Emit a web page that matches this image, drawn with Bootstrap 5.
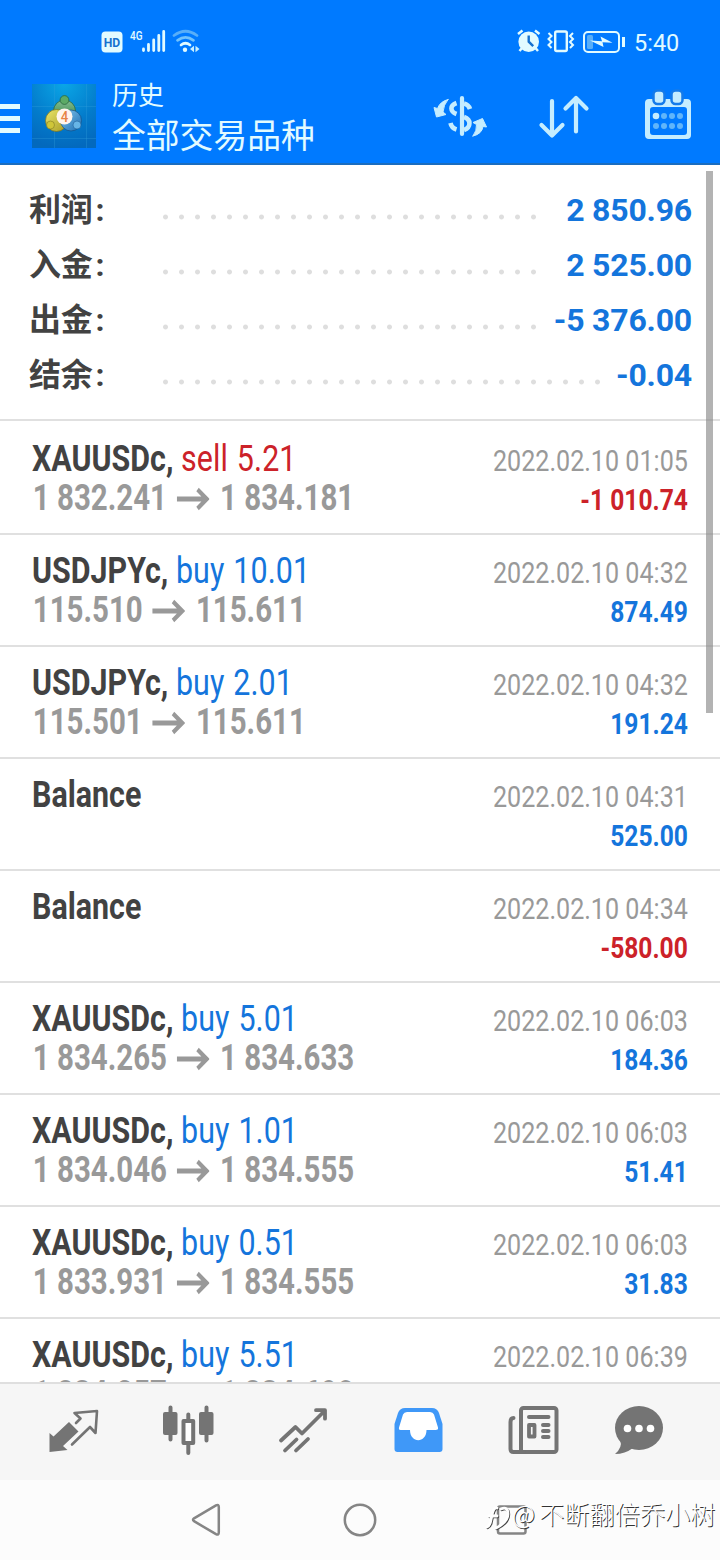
<!DOCTYPE html>
<html lang="zh-CN">
<head>
<meta charset="utf-8">
<meta name="viewport" content="width=device-width, initial-scale=1">
<title>历史</title>
<link href="https://cdn.jsdelivr.net/npm/bootstrap@5.3.0/dist/css/bootstrap.min.css" rel="stylesheet">
<style>
body{font-family:Roboto,"Noto Sans CJK SC",sans-serif;background:#fff;color:#424242}
svg{display:block;flex:none}
.screen{width:720px;height:1560px}
.top-area{height:165px;background:#007aff;border-bottom:2px solid #1b6dbf;color:#e2fbff}
.status-row{height:84px;padding-left:101px}
.status-right{margin-left:316px}
.clock{font-size:23.5px;line-height:28px;margin:1px 0 0 9px}
.app-row{height:79px}
.head-text{margin:-5px 0 0 16px;width:300px}
.head-sub{font-size:26px;line-height:34px}
.head-main{font-size:33.8px;line-height:48px}
.summary{height:256px;padding:18px 28px 0;border-bottom:2px solid #e0e0e0}
.sum-row{height:55px}
.sum-label{width:129px;font-size:32px;line-height:55px;font-weight:700;padding-left:1px;letter-spacing:-.2px;position:relative}
.sum-label i{font-style:normal;margin-left:3px}
.sum-val{font-size:32px;line-height:55px;font-weight:700;color:#1475dc;letter-spacing:-.2px;white-space:pre}
.leader{height:16px;width:384px;margin-top:13px;background:radial-gradient(circle at 8.500px 8px,#dedede 2px,transparent 2.9px) 0 0/16px 16px}
.leader-long{width:448px}
.deals{height:961px}
.deal{height:112px;padding:17px 32px 0;border-bottom:2px solid #e0e0e0}
.deal:first-child{height:114px;padding-top:19px}
.line-sym,.line-price{font-size:36px;line-height:39px;white-space:nowrap;transform-origin:0 0}
.line-sym{transform:scaleX(.845)}
.line-sym span{word-spacing:1.5px;letter-spacing:.1px}
.line-price{transform:scaleX(.818);font-weight:700;color:#999;padding-left:1px}
.line-date,.line-sum{font-size:30px;line-height:39px;white-space:nowrap;transform-origin:100% 0;text-align:right}
.deal-right{padding-top:1px}
.line-date{transform:scaleX(.837);color:#999}
.line-sum{transform:scaleX(.82);font-weight:700}
.up{color:#1475dc}.down{color:#cc2229}
.arr{display:inline-block;width:40px;height:24px;margin:0 13px 0 12px;vertical-align:-1px}
.scroller{right:7px;top:171px;width:7px;height:542px;background:rgba(128,128,128,.6)}
.tabs{height:98px;background:#f6f6f6;border-top:2px solid #dfdfdf}
.sysnav{height:80px;background:#fcfcfc}
.stamp{left:484px;top:1500px;height:32px;color:#fff}
.stamp-text{font-size:25.2px;line-height:30px;margin-top:-2px;text-shadow:1px 1px 0 #333;font-family:"Noto Sans CJK SC",sans-serif;font-weight:300}
</style>
</head>
<body>
<div class="screen position-relative overflow-hidden d-flex flex-column">
  <header class="top-area flex-shrink-0">
    <div class="status-row d-flex align-items-center">
      <svg width="100" height="30" viewBox="101 27 100 30">
        <rect x="101.500" y="31.500" width="21" height="21" rx="4" fill="#e2fbff"/>
        <text x="112" y="46.800" font-size="13.500" font-weight="700" text-anchor="middle" fill="#1672cf" textLength="16.500" lengthAdjust="spacingAndGlyphs">HD</text>
        <text x="130" y="40" font-size="13.500" font-weight="500" fill="#e2fbff" textLength="12.500" lengthAdjust="spacingAndGlyphs">4G</text>
        <path d="M143.500 49v1.500M148.500 44.500v6M153.700 40v10.500M158.800 35.500v15M163.700 31.500v19" stroke="#e2fbff" stroke-width="2.800" stroke-linecap="round"/>
        <g fill="none" stroke-width="2.700" stroke-linecap="round">
          <path d="M174 35.500q11.500-8.500 23 0" stroke="#58aef8"/>
          <path d="M177.500 40.300q8-6 16 0" stroke="#72c2fb"/>
          <path d="M181 45q4.500-3.500 9 0" stroke="#e2fbff"/>
        </g>
        <circle cx="185" cy="49.800" r="2.200" fill="#e2fbff"/>
        <path d="M190 49l4-3.200v6.400zM199.500 49l-4-3.200v6.400z" fill="#c8f0ff"/>
      </svg>
      <svg class="status-right" width="108" height="30" viewBox="517 27 108 30" fill="none" stroke="#e2fbff">
        <circle cx="528.700" cy="41.700" r="10.300" fill="#e2fbff" stroke="none"/>
        <path d="M518 34l4.500-3.500M539.500 34L535 30.500M522 48l-2.500 3M535.500 48l2.500 3" stroke-width="2.500"/>
        <path d="M528.700 35.500v6.200l4.500 4.500" stroke="#1672cf" stroke-width="2.400"/>
        <rect x="555.200" y="31.500" width="11.600" height="19.500" rx="1.500" stroke-width="2.400"/>
        <path d="M548.500 33l3 3-3 3 3 3-3 3 3 3M573 33l-3 3 3 3-3 3 3 3-3 3" stroke-width="2"/>
        <rect x="584" y="32" width="35" height="20" rx="4" stroke-width="2"/>
        <rect x="587" y="35" width="6" height="14" rx="1.500" fill="#58aef8" stroke="none"/>
        <path d="M590 40.500l12 .8-1.500-4.800 12 6.300-10-.5 1 4.700z" fill="#e2fbff" stroke="none"/>
        <path d="M623.500 37v10" stroke-width="3"/>
      </svg>
      <span class="clock">5:40</span>
    </div>
    <div class="app-row d-flex">
      <svg width="32" height="64" viewBox="0 84 32 64"><path d="M0 106.500h20M0 118.500h20M0 130.500h20" stroke="#e2fbff" stroke-width="4.800"/></svg>
      <svg width="64" height="64" viewBox="0 0 64 64">
        <defs>
          <radialGradient id="tile" cx=".5" cy="0" r="1"><stop offset="0" stop-color="#0aa6e6"/><stop offset=".6" stop-color="#037bcb"/><stop offset="1" stop-color="#0369bd"/></radialGradient>
          <linearGradient id="gr" x2="0" y2="1"><stop stop-color="#86bd92"/><stop offset="1" stop-color="#287e39"/></linearGradient>
          <linearGradient id="ye" x2="1" y2="1"><stop stop-color="#e9e56b"/><stop offset="1" stop-color="#a79c23"/></linearGradient>
          <linearGradient id="bl" x2="1" y2="1"><stop stop-color="#85c7ed"/><stop offset="1" stop-color="#1a6db4"/></linearGradient>
        </defs>
        <rect width="64" height="64" fill="url(#tile)"/>
        <path d="M0 22.500h64M0 54.500h64M22.500 0v64M54.500 0v64" stroke="#35a3de" stroke-opacity=".3"/>
        <circle cx="32.500" cy="27" r="11" fill="url(#gr)" stroke="#235f38" stroke-width=".7"/><circle cx="32.500" cy="16" r="4.400" fill="#5caa66" stroke="#235f38" stroke-width=".7"/>
        <circle cx="24.500" cy="36.500" r="11" fill="url(#ye)" stroke="#756e20" stroke-width=".7"/><circle cx="18.500" cy="41" r="4" fill="#cfc638" stroke="#756e20" stroke-width=".5"/>
        <circle cx="39" cy="36.500" r="10.500" fill="url(#bl)" stroke="#17518a" stroke-width=".7"/><circle cx="45" cy="41" r="4" fill="#66b5e6" stroke="#17518a" stroke-width=".5"/>
        <circle cx="32.500" cy="32.500" r="8" fill="#fff5ed"/>
        <text x="32.500" y="38" font-size="15.500" text-anchor="middle" fill="#e78345" font-weight="500" textLength="7.500" lengthAdjust="spacingAndGlyphs">4</text>
      </svg>
      <div class="head-text">
        <div class="head-sub">历史</div>
        <div class="head-main">全部交易品种</div>
      </div>
      <svg width="292" height="64" viewBox="412 84 292 64" fill="none" stroke="#c5edff" stroke-linecap="round" stroke-linejoin="round">
        <path d="M462 98v36" stroke-width="4.200"/>
        <path d="M456.500 103c-7 2.500-6.500 8.500 0 11M456.500 129.500q-5-1.500-6-6.500M464 103.500q4.500 1 6 5.500M464 117c7.500 2.500 7 10.500 0 13" stroke-width="4.600" stroke-linecap="butt"/>
        <path d="M448 99.500q-8 2-10.500 9l-3.500-1 2.500 9.500 9.500-2.500-3-2.500q.5-7 5-12.500zM473 136q9-2 10-9.500l3.500.5-4-8.500-9.500 4 3.500 2q.5 6-3.500 11.500z" fill="#c5edff" stroke-width="1"/>
        <path d="M552 101v34M541.500 125l10.500 10.500L562.500 125M576 131.500V98M565.500 108.500L576 98l10.500 10.500" stroke-width="4.200"/>
        <path d="M649 99h38a4 4 0 0 1 4 4v32a4 4 0 0 1-4 4h-38a4 4 0 0 1-4-4v-32a4 4 0 0 1 4-4zm4 8a3 3 0 0 0-3 3v22a3 3 0 0 0 3 3h31a3 3 0 0 0 3-3v-22a3 3 0 0 0-3-3z" fill="#c5edff" fill-rule="evenodd" stroke="none"/>
        <rect x="653.500" y="90.500" width="11" height="13.500" rx="4" fill="#c5edff" stroke="#147bea" stroke-width="2.500"/>
        <rect x="671.500" y="90.500" width="11" height="13.500" rx="4" fill="#c5edff" stroke="#147bea" stroke-width="2.500"/>
        <g fill="#60b5fa" stroke="none"><circle cx="656" cy="116" r="3.300" fill="#c5edff"/><circle cx="664" cy="116" r="3"/><circle cx="672" cy="116" r="3"/><circle cx="680" cy="116" r="3"/><circle cx="656" cy="126" r="3"/><circle cx="664" cy="126" r="3"/><circle cx="672" cy="126" r="3"/><circle cx="680" cy="126" r="3"/></g>
      </svg>
    </div>
  </header>

  <section class="summary flex-shrink-0">
    <div class="sum-row d-flex"><div class="sum-label">利润<i>:</i></div><div class="leader align-self-center"></div><div class="sum-val ms-auto">2 850.96</div></div>
    <div class="sum-row d-flex"><div class="sum-label">入金<i>:</i></div><div class="leader align-self-center"></div><div class="sum-val ms-auto">2 525.00</div></div>
    <div class="sum-row d-flex"><div class="sum-label">出金<i>:</i></div><div class="leader align-self-center"></div><div class="sum-val ms-auto">-5 376.00</div></div>
    <div class="sum-row d-flex"><div class="sum-label">结余<i>:</i></div><div class="leader leader-long align-self-center"></div><div class="sum-val ms-auto">-0.04</div></div>
  </section>

  <main class="deals overflow-hidden flex-shrink-0" id="deals"></main>

  <nav class="tabs flex-shrink-0">
    <svg width="720" height="96" viewBox="0 1384 720 96" fill="none" stroke="#747474" stroke-linecap="round" stroke-linejoin="round">
      <path d="M49.500 1433l4 3.500 15.500-14.500 9.500 9.500-15.500 14.500 4.500 4-18 2z" fill="#747474" stroke="none"/>
      <path d="M76 1423l4.500-4.500-6-5.500 22.500-2-1.500 22-5.500-6L72 1444.500" stroke-width="2.600"/>
      <path d="M170.500 1407.500v32M206.500 1407.500v33M188.300 1414.500v6M188.300 1445v8" stroke-width="4"/>
      <g fill="#747474" stroke="none"><rect x="163" y="1412" width="14.500" height="23" rx="2"/><rect x="199" y="1412" width="14.500" height="23" rx="2"/></g>
      <rect x="183.500" y="1421" width="9.700" height="22" stroke-width="4" fill="#fff"/>
      <path d="M281 1440.500l14.500-13.500 6.500 6.500 22-22M316 1410.200h9v8.500M285 1450.500l11.500-11M296 1450.500l12-11.500" stroke-width="3.800"/>
      <path d="M405 1408h27q5 0 7 5l3.500 11v25q0 3-3 3h-42q-3 0-3-3v-25l3.500-11q2-5 7-5z" fill="#3f98f8" stroke="none"/>
      <path d="M407 1412h23q3 0 4 2.500l4 13q.5 2.500-2.500 2.500h-9c0 13.500-16.500 13.500-16.500 0h-9.500q-2 0-1.500-2.500l4-13q1-2.500 4-2.500z" fill="#fff" stroke="none"/>
      <g stroke-width="4"><rect x="521" y="1408" width="35.500" height="44" rx="2.500"/><path d="M513.500 1418q-3 0-3 4v27q0 3 3 3h10M529 1417h19.500M543 1425h5.500M543 1431h5.500M543 1437h5.500"/></g>
      <rect x="529" y="1425" width="5.500" height="11.500" stroke-width="3.800"/>
      <ellipse cx="639" cy="1428" rx="24" ry="22" fill="#747474" stroke="none"/>
      <path d="M620 1440q3 7-5 14 10 0 18-6z" fill="#747474" stroke="none"/>
      <g fill="#fff" stroke="none"><circle cx="627.500" cy="1428.500" r="3.800"/><circle cx="639" cy="1428.500" r="3.800"/><circle cx="650.500" cy="1428.500" r="3.800"/></g>
    </svg>
  </nav>
  <footer class="sysnav flex-shrink-0">
    <svg width="720" height="80" viewBox="0 1480 720 80" fill="none" stroke="#858585" stroke-width="2.500" stroke-linejoin="round">
      <path d="M193 1519.800q0-.8 1-1.500l22-13q2.800-1.200 2.800 1.700v25.500q0 3-2.800 1.700l-22-13q-1-.6-1-1.400z"/>
      <circle cx="360" cy="1520" r="15.200"/>
      <rect x="498" y="1506.500" width="27.500" height="27" rx="2"/>
    </svg>
  </footer>

  <div class="scroller position-absolute"></div>
  <div class="stamp position-absolute d-flex">
    <svg width="28" height="32" viewBox="484 1500 28 32" fill="none" stroke-width="2.800" stroke-linecap="round">
      <g stroke="#444" transform="translate(.8 .8)"><path d="M497 1508q-3-1-4.500 5l-2 9q-1 4-3.500 5M489 1516h8M501 1509q7-3 7 5t-12 14"/></g>
      <g stroke="#fff"><path d="M497 1508q-3-1-4.500 5l-2 9q-1 4-3.500 5M489 1516h8M501 1509q7-3 7 5t-12 14"/></g>
    </svg>
    <span class="stamp-text text-nowrap">@<span class="ms-1">不断翻倍乔小树</span></span>
  </div>
</div>
<script>
const deals = [
  ["XAUUSDc","sell 5.21","1 832.241","1 834.181","01:05","-1 010.74"],
  ["USDJPYc","buy 10.01","115.510","115.611","04:32","874.49"],
  ["USDJPYc","buy 2.01","115.501","115.611","04:32","191.24"],
  ["Balance","","","","04:31","525.00"],
  ["Balance","","","","04:34","-580.00"],
  ["XAUUSDc","buy 5.01","1 834.265","1 834.633","06:03","184.36"],
  ["XAUUSDc","buy 1.01","1 834.046","1 834.555","06:03","51.41"],
  ["XAUUSDc","buy 0.51","1 833.931","1 834.555","06:03","31.83"],
  ["XAUUSDc","buy 5.51","1 834.257","1 834.690","06:39",""]
];
const arrow = '<svg class="arr" viewBox="0 0 41 24" preserveAspectRatio="none" fill="none" stroke="#999" stroke-width="4.8"><path d="M0 12h38M26 2.500L37.500 12 26 21.500"/></svg>';
document.getElementById("deals").innerHTML = deals.map(([s,o,a,b,t,p]) =>
  `<div class="deal d-flex justify-content-between">
    <div><div class="line-sym"><b>${s}${o ? "," : ""}</b> <span class="${o.startsWith("sell") ? "down" : "up"}">${o}</span></div>
    ${a ? `<div class="line-price">${a}${arrow}${b}</div>` : ""}</div>
    <div class="deal-right"><div class="line-date">2022.02.10 ${t}</div><div class="line-sum ${p[0] === "-" ? "down" : "up"}">${p}</div></div>
  </div>`).join("");
</script>
<script src="https://cdn.jsdelivr.net/npm/bootstrap@5.3.0/dist/js/bootstrap.bundle.min.js"></script>
</body>
</html>
